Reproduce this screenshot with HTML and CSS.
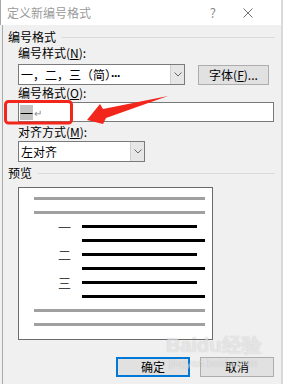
FILE: index.html
```html
<!DOCTYPE html>
<html>
<head>
<meta charset="utf-8" />
<title>定义新编号格式</title>
<link rel="stylesheet" href="styles.css">
</head>
<body>
<div class="window">
    <div class="titlebar">
        <span class="title">定义新编号格式</span>
        <span class="help">?</span>
        <svg class="close" width="10" height="10" viewBox="0 0 10 10"><path d="M0.5 0.5L9.5 9.5M9.5 0.5L0.5 9.5" stroke="#6f6f6f" stroke-width="1" fill="none"/></svg>
    </div>
    <div class="content">
        <div class="group"><span>编号格式</span><i></i></div>
        <div class="label">编号样式(<u>N</u>):</div>
        <div class="row">
            <div class="combo wide">
                <span class="value">一，二，三（简）<b class="dots">···</b></span>
                <span class="arrow"><svg width="8" height="5" viewBox="0 0 8 5"><path d="M0.5 0.5L4 4L7.5 0.5" stroke="#666" fill="none"/></svg></span>
            </div>
            <div class="btn font">字体(<u>F</u>)...</div>
        </div>
        <div class="label">编号格式(<u>O</u>):</div>
        <div class="input"><span class="sel">一</span><span class="ret">↵</span></div>
        <div class="label">对齐方式(<u>M</u>):</div>
        <div class="combo narrow">
            <span class="value">左对齐</span>
            <span class="arrow"><svg width="8" height="5" viewBox="0 0 8 5"><path d="M0.5 0.5L4 4L7.5 0.5" stroke="#666" fill="none"/></svg></span>
        </div>
        <div class="group"><span>预览</span><i></i></div>
        <div class="preview">
            <div class="bar grey"></div>
            <div class="bar grey"></div>
            <div class="item"><span class="num">一</span><span class="bar black short"></span></div>
            <div class="bar black long"></div>
            <div class="item"><span class="num">二</span><span class="bar black short"></span></div>
            <div class="bar black long"></div>
            <div class="item"><span class="num">三</span><span class="bar black short"></span></div>
            <div class="bar black long"></div>
            <div class="bar grey"></div>
            <div class="bar grey"></div>
        </div>
        <div class="buttons">
            <div class="btn act default">确定</div>
            <div class="btn act">取消</div>
        </div>
    </div>
</div>

<!-- 标注：红框和箭头 -->
<svg class="callout" width="283" height="384" viewBox="0 0 283 384">
    <rect x="5.5" y="101.5" width="66" height="21.5" rx="3" fill="none" stroke="#f3261c" stroke-width="3"/>
    <polygon points="87,120 100,104 103,109 168,96 106,118 103,124" fill="#f3261c"/>
</svg>

<div class="watermark">
    <div class="wm-big">Baidu经验</div>
    <div class="wm-small">jingyan.baidu.com</div>
</div>
</body>
</html>
```

FILE: styles.css
```css
body{
	margin:0;
	width:283px;
	height:384px;
	overflow:hidden;
	position:relative;
	background:#f0f0f0;
	font-family:"Noto Sans CJK SC", sans-serif;
	font-size:12px;
	color:#000;
}
u{ text-decoration:underline; }

.window{
	width:281px;
	height:384px;
	border-right:2px solid #d9d9d9;
}

/* 标题栏 */
.titlebar{
	height:25px;
	background:#fff;
	border-left:1px solid #a8a8a8;
	display:flex;
	align-items:center;
	padding-left:6px;
	padding-right:28px;
}
.titlebar .title{
	flex:1;
	color:#9a9a9a;
	line-height:16px;
}
.titlebar .help{
	color:#8a8a8a;
	font-size:13px;
	margin-right:27px;
	line-height:16px;
}

/* 对话框主体 */
.content{
	margin-left:2px;
	border-left:1px solid #a9a9a9;
	height:359px;
	padding:4px 6px 0 5px;
}

.group{
	display:flex;
	align-items:center;
	height:16px;
	line-height:16px;
}
.group i{
	flex:1;
	margin-left:6px;
	border-top:1px solid #dadada;
}

.label{
	margin-left:10px;
	line-height:16px;
	height:16px;
}

.row{
	display:flex;
	margin:3px 0 0 10px;
}

.combo{
	height:21px;
	box-sizing:border-box;
	border:1px solid #7a7a7a;
	background:#fff;
	display:flex;
}
.combo.wide{ width:167px; }
.combo.narrow{ width:127px; margin:1px 0 0 10px; }
.combo .value{
	flex:1;
	padding-left:2px;
	line-height:19px;
	white-space:nowrap;
}
.combo .dots{
	font-family:"Liberation Sans", sans-serif;
	font-weight:bold;
	letter-spacing:-1px;
	color:#000;
}
.combo .arrow{
	width:14px;
	box-sizing:border-box;
	border-left:1px solid #cfcfcf;
	background:#e6e6e6;
	display:flex;
	align-items:center;
	justify-content:center;
}

.btn{
	height:20px;
	box-sizing:border-box;
	border:1px solid #adadad;
	background:#e1e1e1;
	text-align:center;
	line-height:18px;
}
.btn.font{
	width:71px;
	margin:1px 0 0 13px;
}

.input{
	margin:1px 1px 0 10px;
	height:20px;
	box-sizing:border-box;
	border:1px solid #7a7a7a;
	background:#fff;
	display:flex;
	align-items:center;
	padding-left:1px;
}
.input .sel{
	width:13px;
	height:15px;
	line-height:15px;
	background:#c3c3c3;
	font-size:13px;
	text-align:center;
}
.input .ret{
	color:#8c8c8c;
	font-size:10px;
	line-height:15px;
	margin-left:1px;
}

.input + .label{ margin-top:2px; }
.combo.narrow + .group{ margin-top:3px; }

/* 预览区域 */
.preview{
	width:195px;
	height:153px;
	box-sizing:border-box;
	border:1px solid #6b6b6b;
	background:#fff;
	margin:6px 0 0 10px;
	padding-top:9px;
	display:flex;
	flex-direction:column;
	gap:11px;
}
.bar{ height:3px; display:block; }
.bar.grey{ background:#a0a0a0; margin-left:15px; width:171px; }
.bar.black{ background:#000; }
.bar.short{ width:115px; }
.bar.long{ width:123px; margin-left:63px; }
.item{
	display:flex;
	align-items:center;
	height:3px;
}
.item .num{
	margin-left:39px;
	width:24px;
	font-size:13px;
	line-height:3px;
	color:#444;
}

.buttons{
	display:flex;
	justify-content:flex-end;
	gap:10px;
	margin:17px 1px 0 0;
}
.btn.act{ width:74px; }
.btn.default{
	border:2px solid #0078d7;
	line-height:16px;
}

/* 覆盖层 */
.callout{
	position:absolute;
	top:0;
	left:0;
	pointer-events:none;
}
.watermark{
	position:absolute;
	left:166px;
	top:333px;
	pointer-events:none;
	color:rgba(255,255,255,0.6);
	text-shadow:0 0 1px rgba(0,0,0,0.22);
	font-family:"Liberation Sans", sans-serif;
}
.wm-big{
	font-size:20px;
	font-weight:bold;
	line-height:24px;
}
.wm-small{
	font-size:11px;
	line-height:12px;
	margin-left:3px;
}
```
